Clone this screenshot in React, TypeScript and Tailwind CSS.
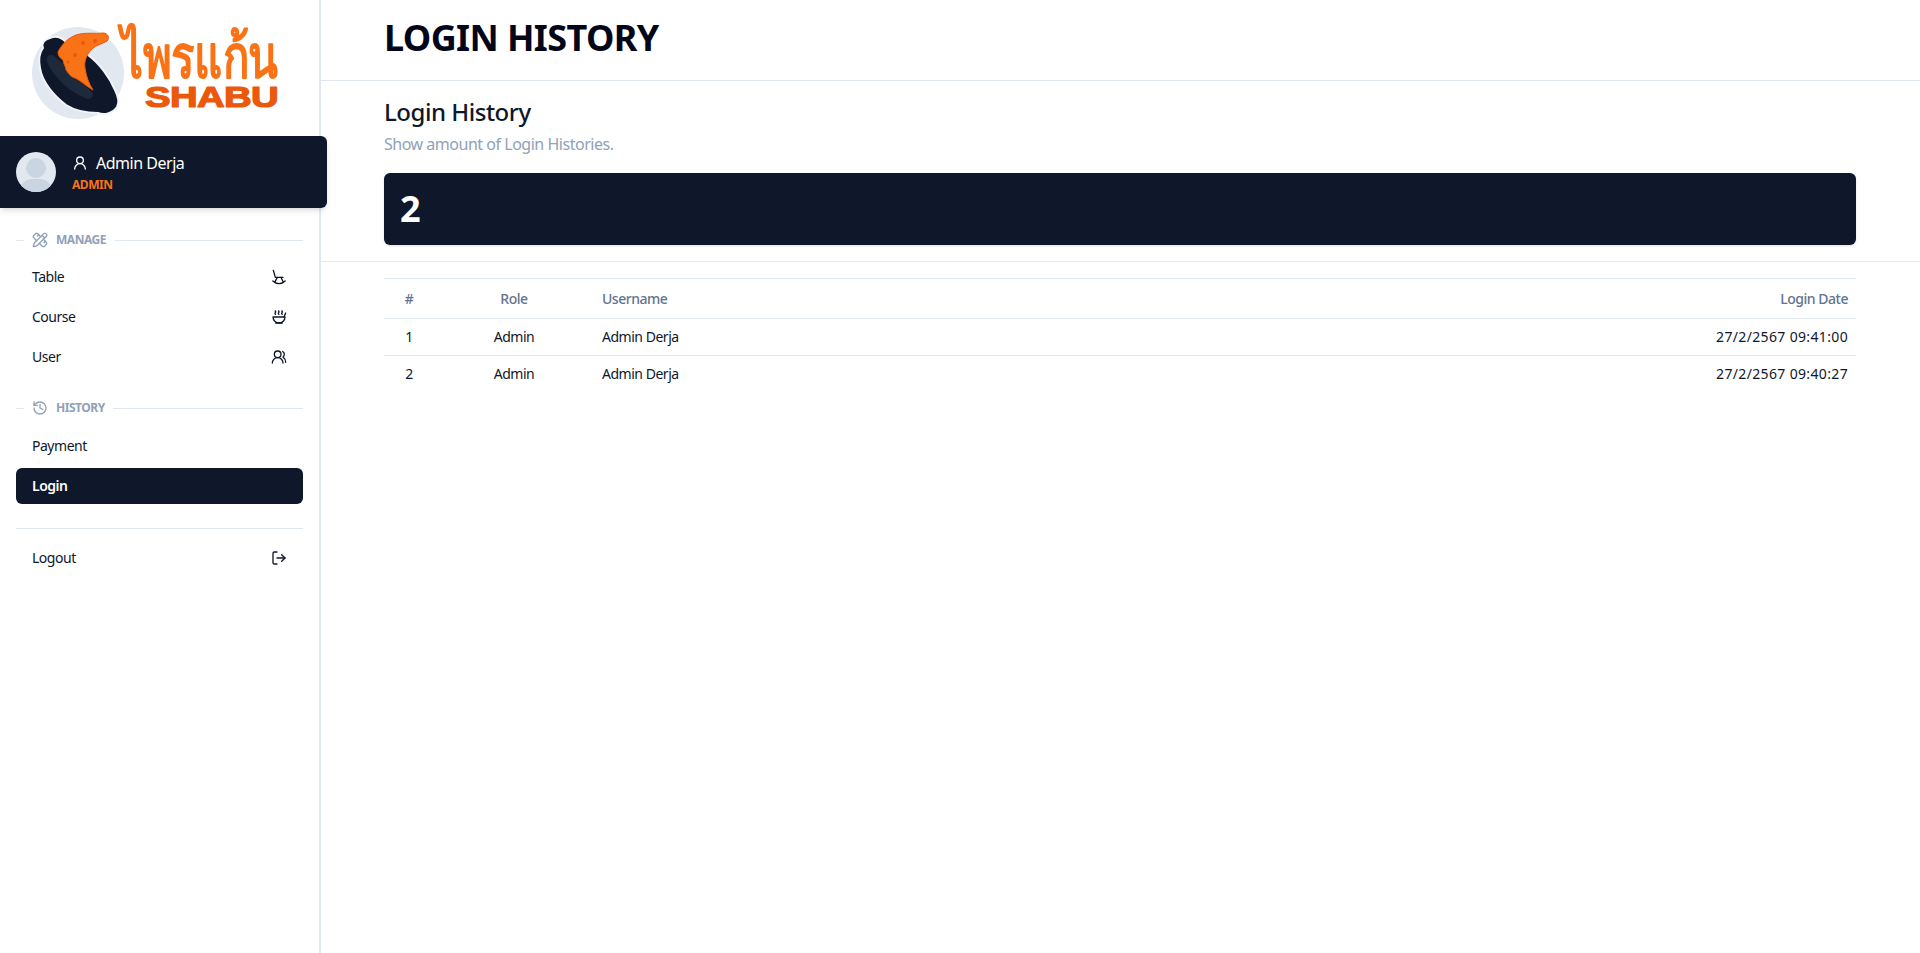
import { History, LogOut, PencilRuler, RockingChair, Soup, UserRound, UsersRound } from "lucide-react";

// pot + dumpling mark, the wordmark stays real text
function Logo() {
  return (
    <div className="h-[136px]">
      <svg width="320" height="136" viewBox="0 0 320 136">
        <circle cx="78" cy="73" r="46" fill="#e2e8f0" />
        <path d="M50 38 C57 35 63 39 66 42 L88 55 C100 64 110 78 115 90 C118 96 120 102 117 107 C112 114 104 115 98 113 C86 113 74 110 66 105 C54 96 42 82 40 68 C38 58 40 52 43 48 C41 43 45 39 50 38 Z" fill="#0f172a" stroke="#f1f5f9" strokeWidth="2" />
        <path d="M47 62 C46 56 50 53 54 56 C66 66 80 80 92 92 C95 96 91 101 85 98 C70 92 54 78 47 62 Z" fill="#1e293b" />
        <path d="M58 52 C62 44 68 38 76 35 C85 32 95 34 103 33 C108 33 110 38 107 41 C102 44 96 45 92 49 C86 55 84 62 85 68 C86 76 89 84 93 90 C86 86 80 80 75 78 C70 77 68 72 66 70 C66 66 63 64 63 60 C60 58 58 56 58 52 Z" fill="#f97316" stroke="#ea580c" strokeWidth="1" />
        <g fill="#ea580c">
          <circle cx="83" cy="43" r="2" />
          <circle cx="95" cy="41" r="2" />
          <circle cx="75" cy="55" r="2" />
          <circle cx="68" cy="62" r="1.5" />
        </g>
        <text
          x="121"
          y="78"
          textLength="157"
          lengthAdjust="spacingAndGlyphs"
          fontSize="60"
          fontFamily="'Noto Sans', sans-serif"
          fill="#f97316"
          stroke="#f97316"
          strokeWidth="2"
          strokeLinejoin="round"
        >
          ไพรแก้น
        </text>
        <text
          x="145"
          y="107"
          textLength="133"
          lengthAdjust="spacingAndGlyphs"
          fontSize="29"
          fontWeight="700"
          fontFamily="'Liberation Sans', sans-serif"
          fill="#ea580c"
          stroke="#ea580c"
          strokeWidth="1.2"
          strokeLinejoin="round"
        >
          SHABU
        </text>
      </svg>
    </div>
  );
}

function SectionLabel({ icon: Icon, label }: { icon: typeof History; label: string }) {
  return (
    <div className="flex items-center h-6 mx-4">
      <div className="w-2 h-px bg-slate-200" />
      <div className="flex items-center gap-2 pl-2 pr-2 text-xs font-bold text-slate-400">
        <Icon className="w-4 h-4" />
        {label}
      </div>
      <div className="flex-1 h-px bg-slate-200" />
    </div>
  );
}

function MenuItem({ label, active, children }: { label: string; active?: boolean; children?: React.ReactNode }) {
  return (
    <div className={`flex items-center justify-between h-9 mb-1 mx-4 px-4 rounded-md text-sm ${active ? "bg-slate-900 text-white font-semibold" : "text-slate-900"}`}>
      {label}
      {children}
    </div>
  );
}

const rows = [
  { id: 1, role: "Admin", username: "Admin Derja", date: "27/2/2567 09:41:00" },
  { id: 2, role: "Admin", username: "Admin Derja", date: "27/2/2567 09:40:27" },
];

export default function App() {
  return (
    <div className="flex h-[953px] bg-white text-slate-900 tracking-[-0.03em] font-['Noto_Sans',sans-serif] overflow-hidden">
      <aside className="relative w-[321px] shrink-0 border-r-2 border-slate-200">
        <Logo />
        <div className="flex items-center gap-4 h-[72px] w-[327px] px-4 bg-slate-900 rounded-r-md shadow-md relative">
          <div className="relative w-10 h-10 rounded-full bg-slate-200 overflow-hidden">
            <div className="absolute left-[10px] top-[6px] w-5 h-5 rounded-full bg-slate-300" />
            <div className="absolute left-[4px] top-[27px] w-8 h-6 rounded-full bg-slate-300" />
          </div>
          <div>
            <div className="flex items-center gap-2 mb-[3px] text-white text-base leading-[22px]">
              <UserRound className="w-4 h-4" />
              Admin Derja
            </div>
            <div className="text-xs font-bold text-[#f97316] leading-4">ADMIN</div>
          </div>
        </div>
        <div className="mt-5">
          <SectionLabel icon={PencilRuler} label="MANAGE" />
        </div>
        <div className="mt-[7px]">
          <MenuItem label="Table"><RockingChair className="w-4 h-4" /></MenuItem>
          <MenuItem label="Course"><Soup className="w-4 h-4" /></MenuItem>
          <MenuItem label="User"><UsersRound className="w-4 h-4" /></MenuItem>
        </div>
        <div className="mt-[21px]">
          <SectionLabel icon={History} label="HISTORY" />
        </div>
        <div className="mt-2">
          <MenuItem label="Payment" />
          <MenuItem label="Login" active />
        </div>
        <div className="mx-4 mt-6 mb-[11px] h-px bg-slate-200" />
        <MenuItem label="Logout"><LogOut className="w-4 h-4" /></MenuItem>
      </aside>
      <main className="flex-1 min-w-0">
        <header className="flex items-center h-[81px] pl-[63px] pr-16 pb-1 border-b border-slate-200">
          <h1 className="text-4xl font-bold text-slate-950 tracking-[-0.017em]">LOGIN HISTORY</h1>
        </header>
        <section className="pl-[63px] pr-16 pt-[15px] pb-4 border-b border-slate-200">
          <h2 className="text-2xl font-medium leading-8">Login History</h2>
          <p className="mt-1 text-base text-slate-400">Show amount of Login Histories.</p>
          <div className="flex items-center h-[72px] mt-[17px] px-4 bg-slate-900 rounded-md shadow-sm text-4xl font-bold text-white">2</div>
        </section>
        <div className="pl-[63px] pr-16 pt-4">
          <table className="w-full text-sm border-t border-slate-200">
            <thead>
              <tr className="h-10 border-b border-slate-200 text-slate-500">
                <th className="w-[50px] font-medium">#</th>
                <th className="w-[160px] font-medium">Role</th>
                <th className="pl-2 text-left font-medium">Username</th>
                <th className="pr-2 text-right font-medium">Login Date</th>
              </tr>
            </thead>
            <tbody>
              {rows.map((row, i) => (
                <tr key={row.id} className={`h-[37px] ${i < rows.length - 1 ? "border-b border-slate-200" : ""}`}>
                  <td className="text-center">{row.id}</td>
                  <td className="text-center">{row.role}</td>
                  <td className="pl-2">{row.username}</td>
                  <td className="pr-2 text-right tracking-[0.025em]">{row.date}</td>
                </tr>
              ))}
            </tbody>
          </table>
        </div>
      </main>
    </div>
  );
}
